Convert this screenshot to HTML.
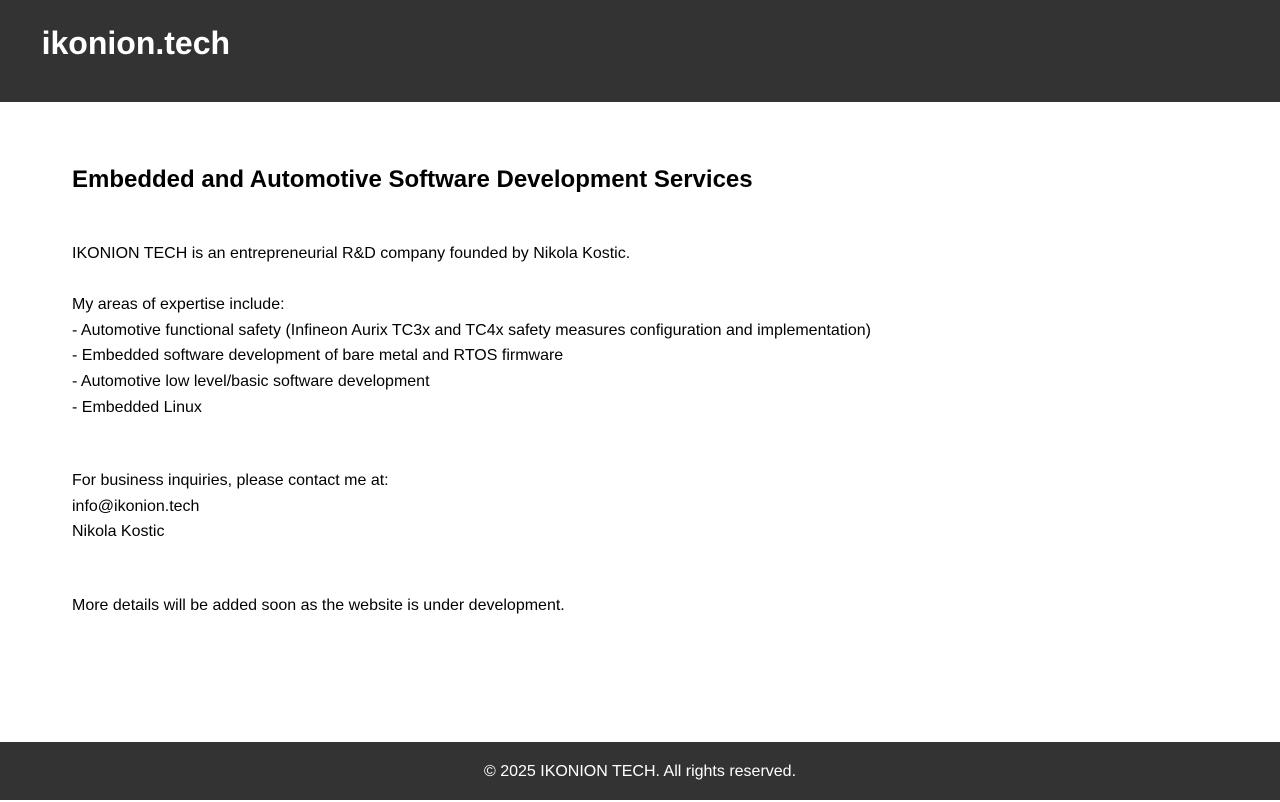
<!DOCTYPE html>
<html>
<head>
<meta charset="utf-8">
<title>ikonion.tech</title>
<style>
html,body{margin:0;padding:0;width:1280px;height:800px;overflow:hidden;background:#fff;font-family:Arial,"Liberation Sans",sans-serif;color:#000}
.h{position:absolute;left:0;top:0;width:1280px;height:102px;background:#333}
.logo{position:absolute;left:41.6px;top:23px;font-size:32px;line-height:40px;font-weight:bold;color:#fff;white-space:nowrap}
h2{position:absolute;left:72px;top:165px;margin:0;font-size:24px;line-height:30px;font-weight:bold;white-space:nowrap}
.t{position:absolute;left:72px;font-size:16px;line-height:20px;white-space:nowrap}
.f{position:absolute;left:0;top:742px;width:1280px;height:58px;background:#333;color:#fff;text-align:center;font-size:16px;line-height:58px;padding-top:0}
.f span{position:relative;top:0.5px}
</style>
</head>
<body>
<div class="h"><div class="logo">ikonion.tech</div></div>
<h2>Embedded and Automotive Software Development Services</h2>
<div class="t" style="top:244px">IKONION TECH is an entrepreneurial R&amp;D company founded by Nikola Kostic.</div>
<div class="t" style="top:295px">My areas of expertise include:</div>
<div class="t" style="top:321px">- Automotive functional safety (Infineon Aurix TC3x and TC4x safety measures configuration and implementation)</div>
<div class="t" style="top:346px">- Embedded software development of bare metal and RTOS firmware</div>
<div class="t" style="top:372px">- Automotive low level/basic software development</div>
<div class="t" style="top:398px">- Embedded Linux</div>
<div class="t" style="top:471px">For business inquiries, please contact me at:</div>
<div class="t" style="top:497px">info@ikonion.tech</div>
<div class="t" style="top:522px">Nikola Kostic</div>
<div class="t" style="top:596px">More details will be added soon as the website is under development.</div>
<div class="f" style="line-height:60px;height:58px">© 2025 IKONION TECH. All rights reserved.</div>
</body>
</html>
